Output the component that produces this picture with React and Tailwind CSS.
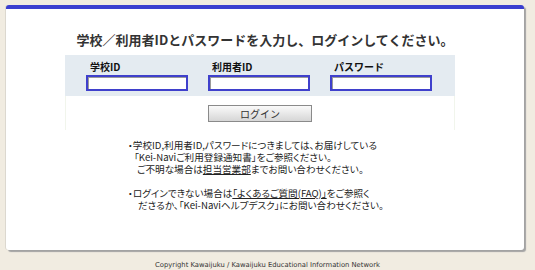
import React from 'react';

const jp = "font-['Noto_Sans_CJK_JP','Noto_Sans',sans-serif]";

const Field = ({ label, type = 'text' }) => (
  <div className="flex flex-col w-[102px]">
    <label className="pl-[4px] text-[10px] leading-[12px] font-bold text-[#111] mb-[2px]">{label}</label>
    <input
      type={type}
      className="h-[16px] w-full bg-white border-2 border-[#3f40cc] shadow-[inset_1px_1px_0_#9a9a9a] outline-none"
    />
  </div>
);

const App = () => {
  return (
    <div className={`h-[270px] w-[535px] bg-[#f1ece1] pt-[5px] ${jp}`}>
      <div className="ml-[6px] w-[518px] h-[245px] bg-white border-t-4 border-[#3b3fcf] rounded-t-[3px] rounded-b-[3px] shadow-[-1px_0_0_#dcd8cf,2px_2px_1px_#a3a3a3]">
        <h1 className="pt-[22px] text-center text-[13px] leading-[18px] font-bold text-[#333]">
          学校／利用者IDとパスワードを入力し、ログインしてください。
        </h1>

        <div className="ml-[59px] mt-[6px] w-[390px]">
          <div className="bg-[#e4ebf1] pt-[6px] pb-[5px] pl-[21px] flex gap-[20px]">
            <Field label="学校ID" />
            <Field label="利用者ID" />
            <Field label="パスワード" type="password" />
          </div>
          <div className="pt-[9px] pb-[8px] flex justify-center border-x border-[#f1f5ec]">
            <button className="w-[104px] h-[17px] border border-[#8a8a8a] bg-gradient-to-b from-[#fafafa] to-[#d6d6d6] text-[10px] leading-[15px] text-[#333]">
              ログイン
            </button>
          </div>
        </div>

        <div className="ml-[122px] mt-[9px] text-[9.6px] leading-[12px] text-[#222] [font-feature-settings:'palt']">
          <p>・学校ID,利用者ID,パスワードにつきましては、お届けしている</p>
          <p className="pl-[6px]">「Kei-Naviご利用登録通知書」をご参照ください。</p>
          <p className="pl-[9px]">
            ご不明な場合は<span className="underline">担当営業部</span>までお問い合わせください。
          </p>
          <p className="mt-[12px]">
            ・ログインできない場合は<span className="underline">「よくあるご質問(FAQ)」</span>をご参照く
          </p>
          <p className="pl-[10px]">ださるか、「Kei-Naviヘルプデスク」にお問い合わせください。</p>
        </div>
      </div>

      <p className="mt-[11px] text-center text-[6.8px] leading-[8px] text-[#333] font-['DejaVu_Sans',sans-serif]">
        Copyright Kawaijuku / Kawaijuku Educational Information Network
      </p>
    </div>
  );
};

export default App;
